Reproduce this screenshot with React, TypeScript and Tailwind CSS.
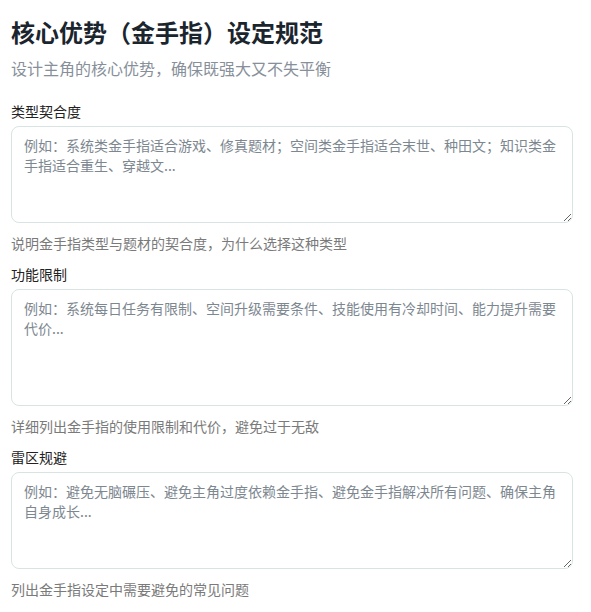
import React, { useState } from 'react';

interface FieldProps {
  label: string;
  placeholder: string;
  hint: string;
  height: string;
  value: string;
  onChange: (v: string) => void;
}

const Field: React.FC<FieldProps> = ({ label, placeholder, hint, height, value, onChange }) => (
  <div className="flex flex-col">
    <label className="text-[14px] leading-5 text-[#222] mb-[5px]">{label}</label>
    <textarea
      value={value}
      onChange={(e) => onChange(e.target.value)}
      placeholder={placeholder}
      className={`w-[562px] ${height} px-3 py-2 text-[14px] leading-5 text-[#333] placeholder:text-[#7d8790] border border-[#d8e4e4] rounded-lg outline-none focus:border-[#9fc5c5] bg-white`}
    />
    <p className="mt-[10px] text-[14px] leading-5 text-[#7a7a7a]">{hint}</p>
  </div>
);

const App: React.FC = () => {
  const [fit, setFit] = useState('');
  const [limits, setLimits] = useState('');
  const [pitfalls, setPitfalls] = useState('');

  return (
    <div
      className="h-[612px] overflow-hidden bg-white pl-[11px] pt-[16px]"
      style={{ fontFamily: '"Noto Sans CJK SC", "Noto Sans", sans-serif' }}
    >
      <h1 className="text-[24px] leading-8 font-bold text-[#1b252e]">核心优势（金手指）设定规范</h1>
      <p className="mt-2 text-[16px] leading-6 text-[#87909a]">设计主角的核心优势，确保既强大又不失平衡</p>

      <div className="mt-[21px] flex flex-col gap-[11px]">
        <Field
          label="类型契合度"
          placeholder="例如：系统类金手指适合游戏、修真题材；空间类金手指适合末世、种田文；知识类金手指适合重生、穿越文..."
          hint="说明金手指类型与题材的契合度，为什么选择这种类型"
          height="h-[97px]"
          value={fit}
          onChange={setFit}
        />
        <Field
          label="功能限制"
          placeholder="例如：系统每日任务有限制、空间升级需要条件、技能使用有冷却时间、能力提升需要代价..."
          hint="详细列出金手指的使用限制和代价，避免过于无敌"
          height="h-[117px]"
          value={limits}
          onChange={setLimits}
        />
        <Field
          label="雷区规避"
          placeholder="例如：避免无脑碾压、避免主角过度依赖金手指、避免金手指解决所有问题、确保主角自身成长..."
          hint="列出金手指设定中需要避免的常见问题"
          height="h-[97px]"
          value={pitfalls}
          onChange={setPitfalls}
        />
      </div>
    </div>
  );
};

export default App;
